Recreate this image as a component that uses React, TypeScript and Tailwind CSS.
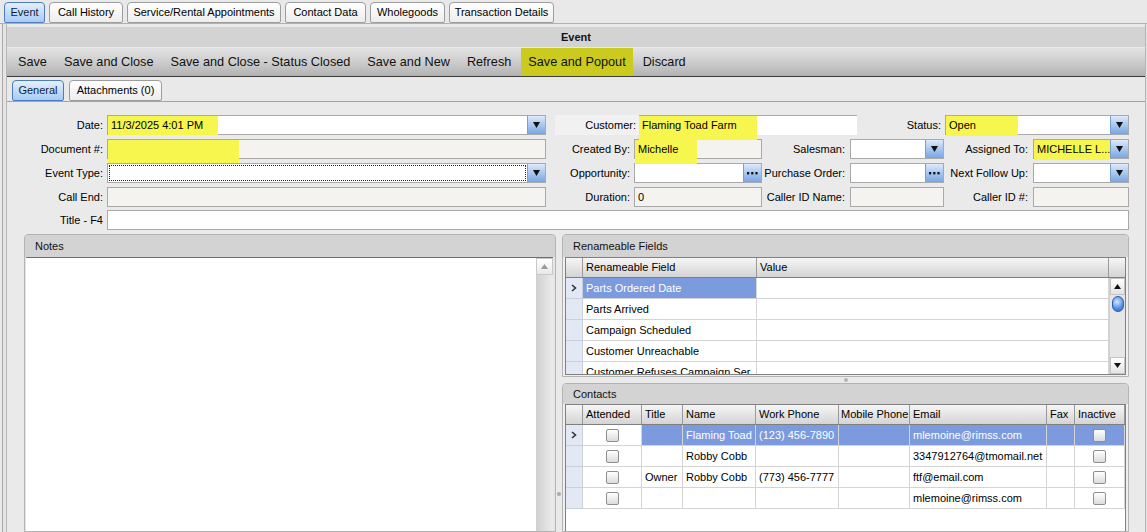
import React from "react";

type Kids = { children?: React.ReactNode };

function TopTab({ children, className = "", active = false }: Kids & { className?: string; active?: boolean }) {
  return (
    <div
      className={`h-[21px] flex items-center justify-center rounded-t-[4px] rounded-b-[2px] border text-[11px] ${className} ${
        active
          ? "border-[#4d7cc0] bg-gradient-to-b from-[#e4f0ff] to-[#a6cbf4] text-[#0d1e3c]"
          : "border-[#9d9d9d] bg-gradient-to-b from-white to-[#ededed]"
      }`}
    >
      {children}
    </div>
  );
}

function DropBtn() {
  return (
    <div className="w-[18px] h-full shrink-0 border-l border-[#7a9ed2] bg-gradient-to-b from-[#dde9fa] via-[#a8c8f0] to-[#78a6e3] flex items-center justify-center">
      <svg width="7" height="6" viewBox="0 0 7 6">
        <path d="M0 0H7L3.5 6Z" fill="#111" />
      </svg>
    </div>
  );
}

function DotsBtn() {
  return (
    <div className="w-[18px] h-full shrink-0 border-l border-[#7a9ed2] bg-gradient-to-b from-[#dde9fa] via-[#a8c8f0] to-[#78a6e3] flex items-center justify-center">
      <svg width="11" height="3" viewBox="0 0 11 3">
        <rect x="0" y="0" width="2.2" height="2.4" fill="#111" />
        <rect x="4.2" y="0" width="2.2" height="2.4" fill="#111" />
        <rect x="8.4" y="0" width="2.2" height="2.4" fill="#111" />
      </svg>
    </div>
  );
}

function Field({
  className = "",
  disabled = false,
  btn,
  focus = false,
  children,
}: Kids & { className?: string; disabled?: boolean; btn?: "drop" | "dots"; focus?: boolean }) {
  return (
    <div
      className={`relative h-[20px] shrink-0 flex border border-[#a9a9a9] ${disabled ? "bg-[#f4f3ef]" : "bg-white"} ${className}`}
    >
      <div className="relative flex-1 flex items-center pl-[3px] whitespace-nowrap">
        {focus && <div className="absolute inset-[1px] border border-dotted border-[#222]" />}
        {children}
      </div>
      {btn === "drop" && <DropBtn />}
      {btn === "dots" && <DotsBtn />}
    </div>
  );
}

function Hl({ className = "" }: { className?: string }) {
  return <div className={`absolute left-0 top-0 bg-[#f6f64e] ${className}`} />;
}

function Label({ className = "", children }: Kids & { className?: string }) {
  return <div className={`shrink-0 text-right whitespace-nowrap ${className}`}>{children}</div>;
}

function Check() {
  return (
    <div className="w-[13px] h-[13px] rounded-[2px] border border-[#8d8e8e] bg-gradient-to-b from-white to-[#dcdcdc]" />
  );
}

function Chevron() {
  return (
    <svg width="6" height="8" viewBox="0 0 6 8">
      <path d="M1 1L4.5 4L1 7" stroke="#333" strokeWidth="1.6" fill="none" />
    </svg>
  );
}

function ScrollArrow({ up }: { up?: boolean }) {
  return (
    <div className="h-[17px] w-full border border-[#c4c4c4] bg-gradient-to-b from-white to-[#e3e3e3] flex items-center justify-center">
      <svg width="7" height="5" viewBox="0 0 7 5">
        {up ? <path d="M0 5H7L3.5 0Z" fill="#111" /> : <path d="M0 0H7L3.5 5Z" fill="#111" />}
      </svg>
    </div>
  );
}

const renameRows = [
  "Parts Ordered Date",
  "Parts Arrived",
  "Campaign Scheduled",
  "Customer Unreachable",
  "Customer Refuses Campaign Ser",
];

const contacts = [
  { sel: true, title: "", name: "Flaming Toad", work: "(123) 456-7890", email: "mlemoine@rimss.com" },
  { sel: false, title: "", name: "Robby Cobb", work: "", email: "3347912764@tmomail.net" },
  { sel: false, title: "Owner", name: "Robby Cobb", work: "(773) 456-7777", email: "ftf@email.com" },
  { sel: false, title: "", name: "", work: "", email: "mlemoine@rimss.com" },
];

export default function App() {
  return (
    <div className="w-[1147px] h-[532px] overflow-hidden bg-[#e9e9e9] text-black text-[11px] leading-none font-['Liberation_Sans',Arial,sans-serif]">
      {/* top tabs */}
      <div className="h-[23px] flex items-end gap-[4px] pl-[4px]">
        <TopTab active className="w-[41px]">Event</TopTab>
        <TopTab className="w-[74px]">Call History</TopTab>
        <TopTab className="w-[154px]">Service/Rental Appointments</TopTab>
        <TopTab className="w-[81px]">Contact Data</TopTab>
        <TopTab className="w-[75px]">Wholegoods</TopTab>
        <TopTab className="w-[105px]">Transaction Details</TopTab>
      </div>

      {/* frame */}
      <div className="h-[509px] border-t border-[#b0b0b0] pl-[2px] flex">
        <div className="flex-1 flex border-l border-[#a9a9a9] pl-[3px] bg-[#e4e4e4]">
          <div className="flex-1 flex flex-col border-l border-[#b8b8b8] border-r border-r-[#b5b5b5] mr-[1px] bg-[#e9e9e9] min-w-0">
            {/* Event header */}
            <div className="mt-[3px] h-[20px] bg-[#d3d3d3] flex items-center justify-center font-bold text-[11px] text-[#111]">
              Event
            </div>
            {/* toolbar */}
            <div className="mt-[1px] h-[29px] border-b border-[#3a3a3a] bg-gradient-to-b from-[#e2e2e2] via-[#cdcdcd] to-[#b2b2b2] flex items-stretch gap-[3px] pl-[4px] text-[12.7px] text-[#111]">
              <div className="px-[7px] flex items-center">Save</div>
              <div className="px-[7px] flex items-center">Save and Close</div>
              <div className="px-[7px] flex items-center">Save and Close - Status Closed</div>
              <div className="px-[7px] flex items-center">Save and New</div>
              <div className="px-[7px] flex items-center">Refresh</div>
              <div className="px-[7px] flex items-center bg-[#cbcb1f]">Save and Popout</div>
              <div className="px-[7px] flex items-center">Discard</div>
            </div>
            {/* sub tabs */}
            <div className="h-[25px] flex items-end gap-[5px] pl-[5px] border-b border-[#a3a3a3]">
              <TopTab active className="w-[52px] h-[20px]">General</TopTab>
              <TopTab className="w-[93px] h-[20px]">Attachments (0)</TopTab>
            </div>

            {/* form */}
            <div className="flex-1 min-h-0 flex flex-col pt-[13px] bg-[#eaeaea]">
              <div className="flex">
                {/* left column */}
                <div className="flex flex-col gap-[4px]">
                  <div className="flex items-center">
                    <Label className="w-[96px]">Date:</Label>
                    <Field className="ml-[4px] w-[439px]" btn="drop">
                      <Hl className="w-[110px] h-[19px]" />
                      <span className="relative">11/3/2025 4:01 PM</span>
                    </Field>
                  </div>
                  <div className="flex items-center">
                    <Label className="w-[96px]">Document #:</Label>
                    <Field className="ml-[4px] w-[439px]" disabled>
                      <Hl className="w-[131px] h-[23px] z-10" />
                    </Field>
                  </div>
                  <div className="flex items-center">
                    <Label className="w-[96px]">Event Type:</Label>
                    <Field className="ml-[4px] w-[439px]" btn="drop" focus />
                  </div>
                  <div className="flex items-center">
                    <Label className="w-[96px]">Call End:</Label>
                    <Field className="ml-[4px] w-[439px]" disabled />
                  </div>
                </div>

                {/* right section */}
                <div className="ml-[9px] w-[574px] flex flex-col gap-[4px]">
                  <div className="flex items-center h-[20px]">
                    <div className="w-[84px] h-[20px] bg-[#f1f1f1] flex items-center justify-end pr-[3px]">Customer:</div>
                    <div className="relative w-[218px] h-[20px] bg-white border-t border-[#a9a9a9] flex items-center pl-[3px]">
                      <Hl className="w-[118px] h-[24px] z-10" />
                      <span className="relative z-20">Flaming Toad Farm</span>
                    </div>
                    <Label className="w-[84px]">Status:</Label>
                    <Field className="ml-[4px] w-[184px]" btn="drop">
                      <Hl className="w-[72px] h-[20px]" />
                      <span className="relative">Open</span>
                    </Field>
                  </div>
                  <div className="flex items-center">
                    <Label className="w-[75px]">Created By:</Label>
                    <Field className="ml-[4px] w-[128px]" disabled>
                      <Hl className="w-[62px] h-[24px] z-10" />
                      <span className="relative z-20">Michelle</span>
                    </Field>
                    <Label className="w-[83px]">Salesman:</Label>
                    <Field className="ml-[5px] w-[94px]" btn="drop" />
                    <Label className="w-[84px]">Assigned To:</Label>
                    <Field className="ml-[5px] w-[96px]" btn="drop">
                      <Hl className="w-[76px] h-[20px]" />
                      <span className="relative">MICHELLE L...</span>
                    </Field>
                  </div>
                  <div className="flex items-center">
                    <Label className="w-[75px]">Opportunity:</Label>
                    <Field className="ml-[4px] w-[128px]" btn="dots" />
                    <Label className="w-[83px]">Purchase Order:</Label>
                    <Field className="ml-[5px] w-[94px]" btn="dots" />
                    <Label className="w-[84px]">Next Follow Up:</Label>
                    <Field className="ml-[5px] w-[96px]" btn="drop" />
                  </div>
                  <div className="flex items-center">
                    <Label className="w-[75px]">Duration:</Label>
                    <Field className="ml-[4px] w-[128px]" disabled>
                      0
                    </Field>
                    <Label className="w-[83px]">Caller ID Name:</Label>
                    <Field className="ml-[5px] w-[94px]" disabled />
                    <Label className="w-[84px]">Caller ID #:</Label>
                    <Field className="ml-[5px] w-[96px]" disabled />
                  </div>
                </div>
              </div>

              {/* title */}
              <div className="flex items-center mt-[3px]">
                <Label className="w-[96px]">Title - F4</Label>
                <Field className="ml-[4px] w-[1022px]" />
              </div>

              {/* panels */}
              <div className="mt-[4px] flex-1 min-h-0 flex">
                <div className="w-[17px] shrink-0" />
                {/* Notes */}
                <div className="w-[532px] shrink-0 flex flex-col border border-[#b3b3b3] rounded-t-[4px] bg-[#e6e6e6]">
                  <div className="h-[22px] shrink-0 bg-[#d3d3d3] rounded-t-[3px] flex items-center pl-[10px] text-[#111]">
                    Notes
                  </div>
                  <div className="flex-1 flex mx-[1px] mr-[2px] border-t border-[#6e6e6e] bg-white">
                    <div className="flex-1" />
                    <div className="w-[17px] bg-gradient-to-r from-[#cfcfcf] to-[#ececec] flex flex-col">
                      <div className="h-[17px] border border-[#c8c8c8] bg-gradient-to-b from-white to-[#e8e8e8] flex items-center justify-center">
                        <svg width="7" height="5" viewBox="0 0 7 5">
                          <path d="M0 5H7L3.5 0Z" fill="#9a9a9a" />
                        </svg>
                      </div>
                    </div>
                  </div>
                </div>
                {/* splitter */}
                <div className="w-[6px] shrink-0 flex flex-col items-center pt-[258px]">
                  <div className="w-[4px] h-[4px] rounded-full bg-[#a9a9a9]" />
                </div>
                {/* right column */}
                <div className="w-[567px] shrink-0 flex flex-col">
                  {/* Renameable fields */}
                  <div className="shrink-0 border border-[#b3b3b3] rounded-t-[4px] bg-[#efefef] pb-[1px]">
                    <div className="h-[22px] bg-[#d3d3d3] rounded-t-[3px] flex items-center pl-[10px] text-[#111]">
                      Renameable Fields
                    </div>
                    <div className="ml-[2px] w-[561px] border border-[#808080] bg-white">
                      <div className="flex h-[20px] bg-gradient-to-b from-[#f6f6f6] to-[#d4d4d4] border-b border-[#7f7f7f]">
                        <div className="w-[17px] border-r border-[#9a9a9a]" />
                        <div className="w-[174px] border-r border-[#9a9a9a] flex items-center pl-[3px]">Renameable Field</div>
                        <div className="w-[352px] border-r border-[#9a9a9a] flex items-center pl-[3px]">Value</div>
                        <div className="flex-1" />
                      </div>
                      <div className="flex h-[96px] overflow-hidden">
                        <div className="w-[543px]">
                          {renameRows.map((r, i) => (
                            <div key={r} className="flex h-[21px]">
                              <div className="w-[17px] shrink-0 bg-[#e2e8f4] border-r border-b border-[#c9cfdc] flex items-center justify-center">
                                {i === 0 && <Chevron />}
                              </div>
                              <div
                                className={`w-[174px] shrink-0 border-r border-b border-[#d4d4d4] flex items-center pl-[3px] whitespace-nowrap overflow-hidden ${
                                  i === 0 ? "bg-[#7c9ade] text-white" : ""
                                }`}
                              >
                                {r}
                              </div>
                              <div className="w-[352px] shrink-0 border-r border-b border-[#d4d4d4]" />
                            </div>
                          ))}
                        </div>
                        <div className="flex-1 flex flex-col bg-[#e6e6e6] border-l border-[#d0d0d0]">
                          <ScrollArrow up />
                          <div className="h-[17px] flex items-center justify-center">
                            <div className="w-[12px] h-[16px] rounded-full border border-[#2c5fb0] bg-[radial-gradient(circle_at_40%_35%,#d6e8ff,#5a93e6_55%,#2f67c4)]" />
                          </div>
                          <div className="flex-1" />
                          <ScrollArrow />
                        </div>
                      </div>
                    </div>
                  </div>
                  {/* splitter */}
                  <div className="h-[6px] shrink-0 flex items-center justify-center">
                    <div className="w-[4px] h-[4px] rounded-full bg-[#b5b5b5]" />
                  </div>
                  {/* Contacts */}
                  <div className="flex-1 min-h-0 flex flex-col border border-[#b3b3b3] rounded-t-[4px] bg-[#efefef]">
                    <div className="h-[20px] shrink-0 bg-[#d3d3d3] rounded-t-[3px] flex items-center pl-[10px] text-[#111]">
                      Contacts
                    </div>
                    <div className="flex-1 ml-[2px] w-[561px] border-t border-l border-r border-[#808080] bg-white">
                      <div className="flex h-[20px] w-[559px] whitespace-nowrap bg-gradient-to-b from-[#f6f6f6] to-[#d4d4d4] border-b border-[#7f7f7f]">
                        <div className="w-[17px] shrink-0 border-r border-[#9a9a9a]" />
                        <div className="w-[59px] shrink-0 border-r border-[#9a9a9a] flex items-center pl-[3px]">Attended</div>
                        <div className="w-[41px] shrink-0 border-r border-[#9a9a9a] flex items-center pl-[3px]">Title</div>
                        <div className="w-[73px] shrink-0 border-r border-[#9a9a9a] flex items-center pl-[3px]">Name</div>
                        <div className="w-[83px] shrink-0 border-r border-[#9a9a9a] flex items-center pl-[3px]">Work Phone</div>
                        <div className="w-[71px] shrink-0 border-r border-[#9a9a9a] flex items-center pl-[2px] overflow-hidden">Mobile Phone</div>
                        <div className="w-[137px] shrink-0 border-r border-[#9a9a9a] flex items-center pl-[3px]">Email</div>
                        <div className="w-[28px] shrink-0 border-r border-[#9a9a9a] flex items-center pl-[3px]">Fax</div>
                        <div className="w-[50px] shrink-0 border-r border-[#9a9a9a] flex items-center pl-[3px]">Inactive</div>
                      </div>
                      {contacts.map((c, i) => {
                        const cell = `shrink-0 border-r border-b border-[#d4d4d4] flex items-center pl-[3px] whitespace-nowrap overflow-hidden ${
                          c.sel ? "bg-[#7c9ade] text-white" : ""
                        }`;
                        return (
                          <div key={i} className="flex h-[21px] w-[559px]">
                            <div className="w-[17px] shrink-0 bg-[#e2e8f4] border-r border-b border-[#c9cfdc] flex items-center justify-center">
                              {c.sel && <Chevron />}
                            </div>
                            <div className="w-[59px] shrink-0 border-r border-b border-[#d4d4d4] flex items-center justify-center">
                              <Check />
                            </div>
                            <div className={`w-[41px] ${cell}`}>{c.title}</div>
                            <div className={`w-[73px] ${cell}`}>{c.name}</div>
                            <div className={`w-[83px] ${cell}`}>{c.work}</div>
                            <div className={`w-[71px] ${cell}`} />
                            <div className={`w-[137px] ${cell}`}>{c.email}</div>
                            <div className={`w-[28px] ${cell}`} />
                            <div
                              className={`w-[50px] shrink-0 border-r border-b border-[#d4d4d4] flex items-center justify-center ${
                                c.sel ? "bg-[#7c9ade]" : ""
                              }`}
                            >
                              <Check />
                            </div>
                          </div>
                        );
                      })}
                    </div>
                  </div>
                </div>
              </div>
            </div>
          </div>
        </div>
      </div>
    </div>
  );
}
